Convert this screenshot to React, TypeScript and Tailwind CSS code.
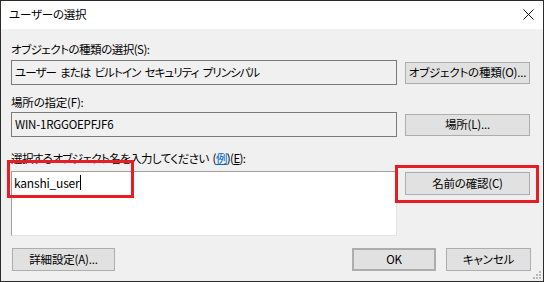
import React from "react";

const font = "font-['Noto_Sans_CJK_JP','Noto_Sans',sans-serif] [font-feature-settings:'palt'] tracking-[-0.2px]";

function Btn({ children, className = "" }: { children: React.ReactNode; className?: string }) {
  return (
    <div
      className={`flex items-center justify-center whitespace-nowrap bg-[#e1e1e1] border border-[#adadad] text-[11.5px] leading-none text-black ${className}`}
    >
      {children}
    </div>
  );
}

export default function App() {
  return (
    <div className={`relative w-[544px] h-[282px] border border-[#2b2b2b] bg-[#f0f0f0] flex flex-col overflow-hidden ${font}`}>
      {/* Title bar */}
      <div className="h-[28px] bg-white flex items-center justify-between pl-[8px] pr-[9px]">
        <span className="text-[11.5px] leading-none text-black">ユーザーの選択</span>
        <svg width="11" height="11" viewBox="0 0 11 11" className="mt-[-1px]">
          <path d="M0.5 0.5 L10.5 10.5 M10.5 0.5 L0.5 10.5" stroke="#111" strokeWidth="1" />
        </svg>
      </div>

      {/* Body */}
      <div className="flex-1 pl-[10px] pr-[12px] flex flex-col text-[11px] text-black">
        <div className="mt-[12px] h-[16px] leading-[16px] text-[11.5px] tracking-[-0.5px]">オブジェクトの種類の選択(S):</div>
        <div className="mt-[3px] flex items-center gap-[8px]">
          <div className="w-[386px] h-[25px] border border-[#7a7a7a] bg-[#f0f0f0] pl-[3px] flex items-center gap-[4px] leading-none text-[11.5px] tracking-[-0.9px]">
            <span>ユーザー</span>
            <span>または</span>
            <span>ビルトイン</span>
            <span>セキュリティ</span>
            <span>プリンシパル</span>
          </div>
          <Btn className="w-[125px] h-[22px]">オブジェクトの種類(O)...</Btn>
        </div>

        <div className="mt-[9px] h-[16px] leading-[16px] text-[11.5px]">場所の指定(F):</div>
        <div className="mt-[2px] flex items-center gap-[8px]">
          <div className="w-[386px] h-[25px] border border-[#7a7a7a] bg-[#f0f0f0] pl-[3px] flex items-center leading-none text-[11.5px]">
            WIN-1RGGOEPFJF6
          </div>
          <Btn className="w-[125px] h-[22px]">場所(L)...</Btn>
        </div>

        <div className="mt-[13px] h-[16px] leading-[16px] text-[11.5px] tracking-[-0.6px] flex">
          <span>選択するオブジェクト名を入力してください</span>
          <span className="ml-[4px]">
            (<span className="text-[#0066cc] underline">例</span>)(<span className="underline">E</span>):
          </span>
        </div>
        <div className="mt-[5px] flex items-start gap-[8px]">
          <div className="w-[386px] h-[65px] border border-t-[#a0a0a0] border-l-[#a0a0a0] border-b-[#e3e3e3] border-r-[#e3e3e3] bg-white pl-[2px] pt-[3px]">
            <div className="flex items-center h-[15px] leading-none text-[12px] tracking-[-0.2px]">
              kanshi_user
              <span className="inline-block w-px h-[15px] bg-black ml-[1px]" />
            </div>
          </div>
          <Btn className="w-[125px] h-[23px] mt-[1px]">名前の確認(C)</Btn>
        </div>

        <div className="mt-[12px] flex items-center">
          <Btn className="w-[103px] h-[23px] ml-[1px]">詳細設定(A)...</Btn>
          <div className="flex-1" />
          <Btn className="w-[84px] h-[23px] border-2 border-[#0078d7]">OK</Btn>
          <Btn className="w-[85px] h-[23px] ml-[10px]">キャンセル</Btn>
        </div>
      </div>

      {/* Annotation boxes */}
      <div className="absolute left-[6px] top-[159px] w-[127px] h-[38px] border-[3px] border-[#e81c24]" />
      <div className="absolute left-[394px] top-[164px] w-[144px] h-[38px] border-[3px] border-[#e81c24]" />

      {/* Resize grip */}
      <svg className="absolute right-[1px] bottom-[1px]" width="10" height="10" viewBox="0 0 10 10">
        <rect x="7" y="1" width="2" height="2" fill="#b8b8b8" />
        <rect x="4" y="4" width="2" height="2" fill="#b8b8b8" />
        <rect x="7" y="4" width="2" height="2" fill="#b8b8b8" />
        <rect x="1" y="7" width="2" height="2" fill="#b8b8b8" />
        <rect x="4" y="7" width="2" height="2" fill="#b8b8b8" />
        <rect x="7" y="7" width="2" height="2" fill="#b8b8b8" />
      </svg>
    </div>
  );
}
